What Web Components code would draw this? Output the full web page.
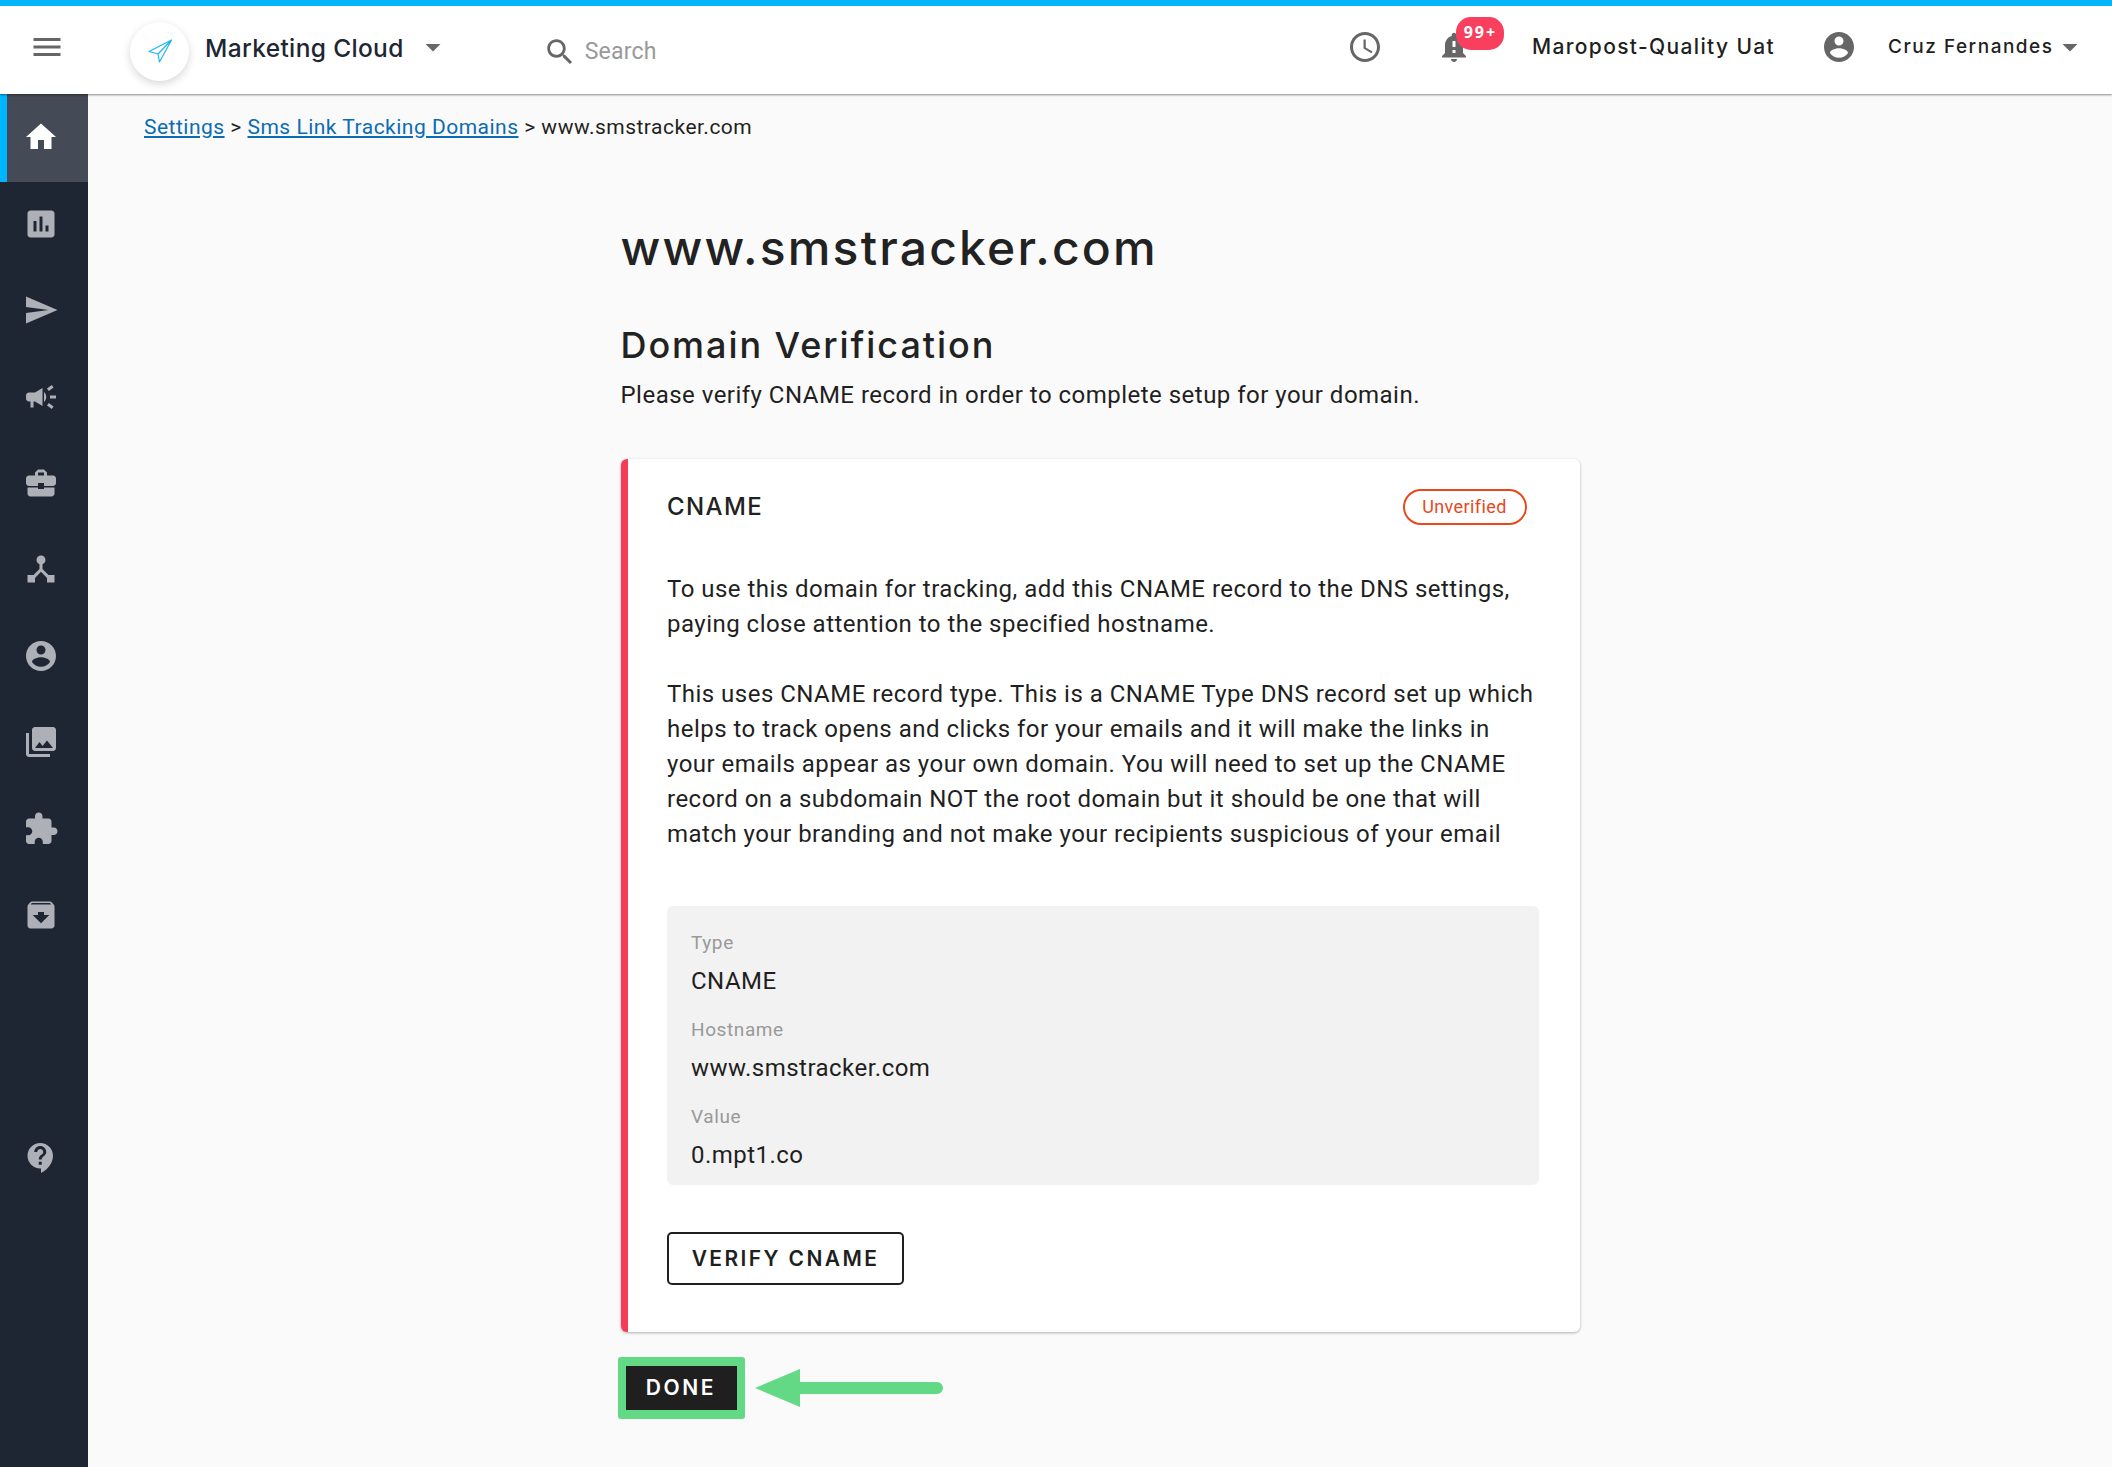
<!DOCTYPE html>
<html lang="en"><head><meta charset="utf-8"><title>Domain</title>
<style>
html,body{margin:0;padding:0;height:100%;background:#fafafa}
body{font-family:Roboto,"Liberation Sans",sans-serif;color:#1f1f1f}
</style></head><body>
<app-shell>
  <top-bar slot="top"></top-bar>
  <side-nav slot="side"></side-nav>
  <bread-crumbs>
    <a href="#">Settings</a> &gt; <a href="#">Sms Link Tracking Domains</a> &gt; www.smstracker.com
  </bread-crumbs>
  <page-column>
    <h-title>www.smstracker.com</h-title>
    <h-sub>Domain Verification</h-sub>
    <p-lead>Please verify CNAME record in order to complete setup for your domain.</p-lead>
    <domain-card heading="CNAME" status="Unverified">
      <card-para>To use this domain for tracking, add this CNAME record to the DNS settings,<br>paying close attention to the specified hostname.</card-para>
      <card-para>This uses CNAME record type. This is a CNAME Type DNS record set up which<br>helps to track opens and clicks for your emails and it will make the links in<br>your emails appear as your own domain. You will need to set up the CNAME<br>record on a subdomain NOT the root domain but it should be one that will<br>match your branding and not make your recipients suspicious of your email</card-para>
      <record-box>
        <record-field label="Type" value="CNAME"></record-field>
        <record-field label="Hostname" value="www.smstracker.com"></record-field>
        <record-field label="Value" value="0.mpt1.co"></record-field>
      </record-box>
      <outline-btn>VERIFY CNAME</outline-btn>
    </domain-card>
    <done-row>DONE</done-row>
  </page-column>
</app-shell>
<script>
const P={
menu:'M3 18h18v-2H3v2zm0-5h18v-2H3v2zm0-7v2h18V6H3z',
home:'M10 20v-6h4v6h5v-8h3L12 3 2 12h3v8z',
assessment:'M19 3H5c-1.1 0-2 .9-2 2v14c0 1.1.9 2 2 2h14c1.1 0 2-.9 2-2V5c0-1.1-.9-2-2-2zM9 17H7v-7h2v7zm4 0h-2V7h2v10zm4 0h-2v-4h2v4z',
send:'M2.01 21L23 12 2.01 3 2 10l15 2-15 2z',
campaign:'M18 11v2h4v-2h-4zm-2 6.61c.96.71 2.21 1.65 3.2 2.39.4-.53.8-1.07 1.2-1.6-.99-.74-2.24-1.68-3.2-2.4-.4.54-.8 1.08-1.2 1.61zM20.4 5.6c-.4-.53-.8-1.07-1.2-1.6-.99.74-2.24 1.68-3.2 2.4.4.53.8 1.07 1.2 1.6.96-.72 2.21-1.65 3.2-2.4zM4 9c-1.1 0-2 .9-2 2v2c0 1.1.9 2 2 2h1v4h2v-4h1l5 3V6L8 9H4zm11.5 3c0-1.33-.58-2.53-1.5-3.35v6.69c.92-.81 1.5-2.01 1.5-3.34z',
business:'M10 16v-1H3.01L3 19c0 1.11.89 2 2 2h14c1.11 0 2-.89 2-2v-4h-7v1h-4zm10-9h-4.01V5l-2-2h-4l-2 2v2H4c-1.1 0-2 .9-2 2v3c0 1.11.89 2 2 2h6v-2h4v2h6c1.1 0 2-.9 2-2V9c0-1.1-.9-2-2-2zm-6 0h-4V5h4v2z',
hub:'M17 16l-4-4V8.82C14.16 8.4 15 7.3 15 6c0-1.66-1.34-3-3-3S9 4.34 9 6c0 1.3.84 2.4 2 2.82V12l-4 4H3v5h5v-3.05l4-4.2 4 4.2V21h5v-5h-4z',
account:'M12 2C6.48 2 2 6.48 2 12s4.48 10 10 10 10-4.48 10-10S17.52 2 12 2zm0 3c1.66 0 3 1.34 3 3s-1.34 3-3 3-3-1.34-3-3 1.34-3 3-3zm0 14.2c-2.5 0-4.71-1.28-6-3.22.03-1.99 4-3.08 6-3.08 1.99 0 5.97 1.09 6 3.08-1.29 1.94-3.5 3.22-6 3.22z',
photos:'M22 16V4c0-1.1-.9-2-2-2H8c-1.1 0-2 .9-2 2v12c0 1.1.9 2 2 2h12c1.1 0 2-.9 2-2zm-11-4l2.03 2.71L16 11l4 5H8l3-4zM2 6v14c0 1.1.9 2 2 2h14v-2H4V6H2z',
extension:'M20.5 11H19V7c0-1.1-.9-2-2-2h-4V3.5C13 2.12 11.88 1 10.5 1S8 2.12 8 3.5V5H4c-1.1 0-1.99.9-1.99 2v3.8H3.5c1.49 0 2.7 1.21 2.7 2.7s-1.21 2.7-2.7 2.7H2V20c0 1.1.9 2 2 2h3.8v-1.5c0-1.49 1.21-2.7 2.7-2.7 1.49 0 2.7 1.21 2.7 2.7V22H17c1.1 0 2-.9 2-2v-4h1.5c1.38 0 2.5-1.12 2.5-2.5S21.88 11 20.5 11z',
archive:'M20.54 5.23l-1.39-1.68C18.88 3.21 18.47 3 18 3H6c-.47 0-.88.21-1.16.55L3.46 5.23C3.17 5.57 3 6.02 3 6.5V19c0 1.1.9 2 2 2h14c1.1 0 2-.9 2-2V6.5c0-.48-.17-.93-.46-1.27zM12 17.5L6.5 12H10v-2h4v2h3.5L12 17.5zM5.12 5l.81-1h12l.94 1H5.12z',
help:'M11.5 2C6.81 2 3 5.81 3 10.5S6.81 19 11.5 19h.5v3c4.86-2.34 8-7 8-11.5C20 5.81 16.19 2 11.5 2zm1 14.5h-2v-2h2v2zm0-3.5h-2c0-3.25 3-3 3-5 0-1.1-.9-2-2-2s-2 .9-2 2h-2c0-2.21 1.79-4 4-4s4 1.79 4 4c0 2.5-3 2.75-3 5z',
schedule:'M11.99 2C6.47 2 2 6.48 2 12s4.47 10 9.99 10C17.52 22 22 17.52 22 12S17.52 2 11.99 2zM12 20c-4.42 0-8-3.58-8-8s3.58-8 8-8 8 3.58 8 8-3.58 8-8 8zm.5-13H11v6l5.25 3.15.75-1.23-4.5-2.67z',
bell:'M18 16v-5c0-3.07-1.64-5.64-4.5-6.32V4c0-.83-.67-1.5-1.5-1.5s-1.5.67-1.5 1.5v.68C7.63 5.36 6 7.92 6 11v5l-2 2v1h16v-1l-2-2zm-5 0h-2v-2h2v2zm0-4h-2V8h2v4zm-1 10c1.1 0 2-.9 2-2h-4c0 1.1.9 2 2 2z',
search:'M15.5 14h-.79l-.28-.27C15.41 12.59 16 11.11 16 9.5 16 5.91 13.09 3 9.5 3S3 5.91 3 9.5 5.91 16 9.5 16c1.61 0 3.09-.59 4.23-1.57l.27.28v.79l5 4.99L20.49 19l-4.99-5zm-6 0C7.01 14 5 11.99 5 9.5S7.01 5 9.5 5 14 7.01 14 9.5 11.99 14 9.5 14z',
caret:'M7 10l5 5 5-5z'
};
const HEAD='Inter,"Liberation Sans",sans-serif';
function def(name,css,html){
  customElements.define(name,class extends HTMLElement{
    constructor(){super();this.attachShadow({mode:'open'});}
    connectedCallback(){
      const h=typeof html==='function'?html(this):html;
      this.shadowRoot.innerHTML='<style>'+css+'</style>'+h;
    }
  });
}
def('m-icon',':host{display:inline-flex;flex:none;color:inherit}svg{display:block;fill:currentColor}',
  e=>{const s=e.getAttribute('size')||36;return `<svg width="${s}" height="${s}" viewBox="0 0 24 24"><path d="${P[e.getAttribute('name')]}"/></svg>`});
def('app-shell',
 `:host{display:grid;grid-template-columns:88px 1fr;grid-template-rows:94px 1fr;height:100vh;overflow:hidden;background:#fafafa}
  .top{grid-column:1/3;position:relative;z-index:2}
  .main{min-width:0}`,
 `<div class="top"><slot name="top"></slot></div><slot name="side"></slot><div class="main"><slot></slot></div>`);
def('top-bar',
 `:host{display:flex;align-items:center;height:94px;box-sizing:border-box;border-top:6px solid #00b6ff;padding-bottom:6px;background:#fff;box-shadow:0 1px 2px rgba(0,0,0,.45);color:#666;font-family:${HEAD}}
  .menu{margin-left:29px;width:36px}
  .logo{margin-left:65px;width:59px;height:59px;border-radius:50%;background:#fff;box-shadow:0 3px 8px rgba(0,0,0,.16);display:flex;align-items:center;justify-content:center;margin-top:8px}
  .logo svg{margin-top:-2px}
  .brand{margin-left:16px;font-size:24.5px;font-weight:500;color:#1e2633;letter-spacing:.35px;white-space:nowrap;line-height:30px;margin-top:1px}
  .c1{margin-left:11px}
  .search{margin-left:92px;display:flex;align-items:center;margin-top:9px}
  .search span{font:23px/30px Roboto,sans-serif;color:#999;margin-left:8px;letter-spacing:.2px}
  .sp{flex:1}
  .bell{position:relative;margin-left:53px;width:36px;height:36px}
  .badge{position:absolute;left:20.5px;top:-12px;width:48px;height:33px;border-radius:15px;background:#f83f5e;color:#fff;font:700 16px/31px "Open Sans",sans-serif;letter-spacing:2px;text-align:center}
  .org{margin-left:60px;font-size:21px;font-weight:500;color:#1f1f1f;letter-spacing:1.35px;white-space:nowrap;line-height:30px}
  .acc{margin-left:46px}
  .user{margin-left:31px;font-size:19px;font-weight:500;color:#1f1f1f;letter-spacing:1.5px;white-space:nowrap;line-height:30px}
  .c2{margin-left:-1.5px;margin-right:24px}`,
 `<m-icon class="menu" name="menu"></m-icon>
  <div class="logo"><svg width="26" height="26" viewBox="0 0 26 26" fill="none" stroke="#1db4f5" stroke-width="1.2" stroke-linejoin="round"><path d="M24.5 3 2 14.5l9 2.5 1.5 8zM24.5 3 11 17"/></svg></div>
  <span class="brand">Marketing Cloud</span>
  <m-icon class="c1" name="caret"></m-icon>
  <div class="search"><m-icon name="search" size="34"></m-icon><span>Search</span></div>
  <span class="sp"></span>
  <m-icon name="schedule"></m-icon>
  <div class="bell"><m-icon name="bell"></m-icon><span class="badge">99+</span></div>
  <span class="org">Maropost-Quality Uat</span>
  <m-icon class="acc" name="account"></m-icon>
  <span class="user">Cruz Fernandes</span>
  <m-icon class="c2" name="caret"></m-icon>`);
def('side-nav',
 `:host{display:flex;flex-direction:column;background:#1e2633;color:#adb0b6;height:100%}
  .i{height:86.45px;flex:none;display:flex;align-items:center;justify-content:center;box-sizing:border-box;padding-right:6px}
  .on{background:#454b56;border-left:7px solid #00b6ff;color:#fff;padding-right:13px;padding-bottom:2px;height:87.5px;margin-bottom:-1px}
  .help{margin-top:156.5px}`,
 ['home','assessment','send','campaign','business','hub','account','photos','extension','archive'].map((n,i)=>`<div class="i ${i?'':'on'}"><m-icon name="${n}"></m-icon></div>`).join('')+`<div class="i help"><m-icon name="help"></m-icon></div>`);
def('bread-crumbs',
 `:host{display:block;margin:16.5px 0 0 56px;font:21px/32px Roboto,sans-serif;letter-spacing:.49px;color:#1f1f1f}
  ::slotted(a){color:#0a6cb4;text-decoration:underline}`,
 `<slot></slot>`);
def('page-column',`:host{display:block;width:959px;margin:0 auto}`,`<slot></slot>`);
def('h-title',`:host{display:block;margin-top:75.5px;font:500 48px/60px ${HEAD};color:#222;letter-spacing:2.2px;white-space:nowrap}`,`<slot></slot>`);
def('h-sub',`:host{display:block;margin-top:45px;font:500 36px/44px ${HEAD};color:#222;letter-spacing:1.95px;white-space:nowrap}`,`<slot></slot>`);
def('p-lead',`:host{display:block;margin-top:10.5px;font:24px/35px Roboto,sans-serif;letter-spacing:.48px;color:#1f1f1f;white-space:nowrap}`,`<slot></slot>`);
def('domain-card',
 `:host{display:block;margin-top:46px;box-sizing:border-box;background:#fff;border-left:7px solid #f53b57;border-radius:6px;box-shadow:0 1px 3px rgba(0,0,0,.3);padding:30px 41px 47px 39.5px}
  .h{display:flex;justify-content:space-between;align-items:center;height:36px;margin-bottom:47px}
  .t{font:500 24px/36px ${HEAD};color:#222;letter-spacing:1.4px}
  .b{box-sizing:border-box;width:124px;height:36px;margin-right:12px;border:2px solid #e8481c;border-radius:18px;color:#e8481c;font:18px/32px Roboto,sans-serif;letter-spacing:.4px;text-align:center}`,
 e=>`<div class="h"><span class="t">${e.getAttribute('heading')}</span><span class="b">${e.getAttribute('status')}</span></div><slot></slot>`);
def('card-para',`:host{display:block;font:24px/35px Roboto,sans-serif;letter-spacing:.48px;color:#1f1f1f;margin-bottom:35px;white-space:nowrap}`,`<slot></slot>`);
def('record-box',`:host{display:block;margin-top:54px;background:#f2f2f2;border-radius:6px;padding:22.5px 24px 6px;box-sizing:border-box;height:279px}`,`<slot></slot>`);
def('record-field',
 `:host{display:block;height:87px}
  .l{font:19px/30px Roboto,sans-serif;letter-spacing:.6px;color:#999}
  .v{font:24px/46px Roboto,sans-serif;letter-spacing:.47px;color:#1f1f1f}`,
 e=>`<div class="l">${e.getAttribute('label')}</div><div class="v">${e.getAttribute('value')}</div>`);
def('outline-btn',
 `:host{display:flex;align-items:center;justify-content:center;box-sizing:border-box;width:237px;height:53px;margin-top:47px;border:2px solid #1f1f1f;border-radius:5px;font:600 21px/1 ${HEAD};letter-spacing:2.4px;color:#1f1f1f}`,
 `<slot></slot>`);
def('done-row',
 `:host{display:flex;align-items:center;margin:25px 0 0 -3px}
  .g{box-sizing:border-box;width:127px;height:62px;padding:9px 8px;background:#63d985;border-radius:3px}
  .b{height:44px;background:#1f1f1f;color:#fff;display:flex;align-items:center;justify-content:center;font:600 21px/1 ${HEAD};letter-spacing:2.6px}
  svg{margin-left:10px;display:block}`,
 `<div class="g"><div class="b"><slot></slot></div></div>
  <svg width="188" height="40" viewBox="0 0 188 40"><path d="M0 20 45 1v13h137a6 6 0 0 1 0 12H45v13z" fill="#63d985"/></svg>`);
</script>
</body></html>
